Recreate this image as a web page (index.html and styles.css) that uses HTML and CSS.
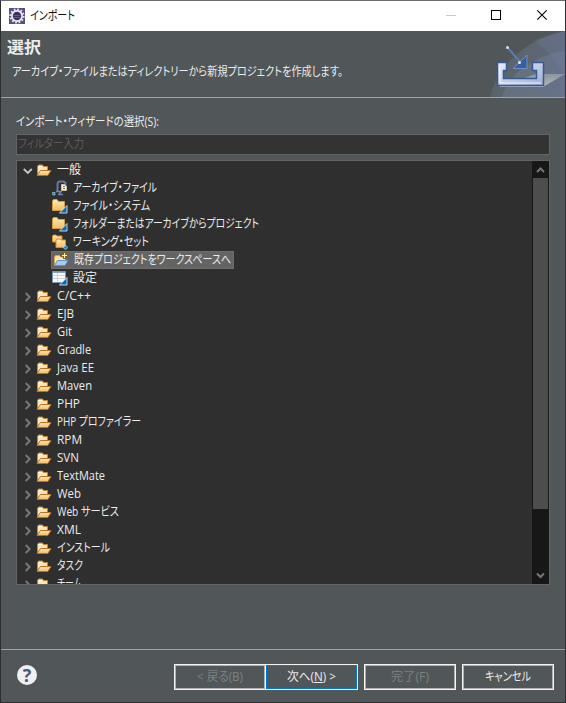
FILE: index.html
```html
<!DOCTYPE html>
<html lang="ja">
<head>
<meta charset="utf-8">
<title>インポート</title>
<link rel="stylesheet" href="styles.css">
</head>
<body>
<svg width="0" height="0" class="defs">
  <defs>
    <linearGradient id="gold" x1="0" y1="0" x2="0" y2="1"><stop offset="0" stop-color="#ffe9b0"/><stop offset="1" stop-color="#f3bd62"/></linearGradient>
    <linearGradient id="tray" x1="0" y1="0" x2="1" y2="1"><stop offset="0" stop-color="#e6edf9"/><stop offset="1" stop-color="#9daed2"/></linearGradient>
    <linearGradient id="sheen" x1="0" y1="0" x2="1" y2="0"><stop offset="0" stop-color="#59636b"/><stop offset=".5" stop-color="#5d666f"/><stop offset="1" stop-color="#5c6880"/></linearGradient>
    <linearGradient id="floor" x1="0" y1="0" x2="0" y2="1"><stop offset="0" stop-color="#8f959e"/><stop offset="1" stop-color="#b3b7bc"/></linearGradient>
    <symbol id="open" viewBox="0 0 16 16"><path d="M1.500 12.500V4.500L2.500 3H6.500L7.500 4.500H11.500V8" fill="#ffe6b3" stroke="#c58435"/><path d="M3 4.500H6" stroke="#fff"/><path d="M1 13.500L4.500 8.500H15L11.800 13.500Z" fill="url(#gold)" stroke="#b9702a"/></symbol>
    <symbol id="folder" viewBox="0 0 16 16"><path d="M.5 12.500V3L1.500 1.500H5L6.500 3.500H12.500V12.500Z" fill="url(#gold)" stroke="#d69b43"/><path d="M15 7.500V15H7.500Z" fill="#0868ac" stroke="#eef5fb" stroke-width=".8"/></symbol>
    <symbol id="archive" viewBox="0 0 16 16"><path d="M5.500 11V4Q5.500 1.500 8 1.500H11Q13.500 1.500 13.500 4V10" fill="none" stroke="#65789e" stroke-width="2"/><path d="M9.500 4.500H12.500L14.500 6.500V10.500H9.500Z" fill="#fff4cf" stroke="#d3c08c"/><path d="M11 6.500H13M11 8.500H13" stroke="#536e9c"/><path d="M4 11.500H10M6 14.500H11M8 11V15" stroke="#7384a5" stroke-width="1.700"/><path d="M-1 11.500C0 13 2 13 3 12V15H1Z" fill="#1682bd" stroke="#d9edf7" stroke-width=".5"/></symbol>
    <symbol id="sets" viewBox="0 0 16 16"><path d="M.5 8V2L1.500 1H4L5 2H10V8Z" fill="url(#gold)" stroke="#d98e2b"/><path d="M4 13.500V6L5 5H8L9 6H13.500V13.500Z" fill="url(#gold)" stroke="#d98e2b"/><circle cx="13.500" cy="13.500" r="1.800" fill="#1579bc" stroke="#dceef9" stroke-width=".6"/></symbol>
    <symbol id="project" viewBox="0 0 16 16"><path d="M1.500 13V5L2.500 3.500H6.500L7.500 5H12.500V9" fill="#ffe4a2" stroke="#d8a34f"/><path d="M1.500 13.500L4.500 8.500H15L12 13.500Z" fill="#a6ccf3" stroke="#628fd0"/><path d="M11.500 0V7M8 3.500H15" stroke="#806219" stroke-width="3"/><path d="M11.500 1V6M9 3.500H14" stroke="#fff1a9"/></symbol>
    <symbol id="prefs" viewBox="0 0 16 16"><path d="M.5 1.500H13.500V12.500H.5Z" fill="#f8fbff" stroke="#7e91b1"/><path d="M1 2.500H13" stroke="#8da4c9"/><path d="M1 5.500H13M1 8.500H13M5.500 3V12" stroke="#c8d4e4"/><path d="M15 7.500V15H7.500Z" fill="#0868ac" stroke="#eef5fb" stroke-width=".8"/></symbol>
    <symbol id="chev" viewBox="0 0 10 16"><path d="M2.700 5L6.700 9L2.700 13" fill="none" stroke="#7b7b7b" stroke-width="1.800"/></symbol>
    <symbol id="down" viewBox="0 0 10 16"><path d="M.8 7L4.800 11L8.800 7" fill="none" stroke="#c4c4c4" stroke-width="1.900"/></symbol>
  </defs>
</svg>
<div class="window">
  <div class="titlebar">
    <svg class="app" viewBox="0 0 16 16"><rect width="16" height="16" fill="#5d4b85"/><circle cx="8" cy="8" r="6.600" fill="none" stroke="#e4e2eb" stroke-width="2" stroke-dasharray="1.800 1.650"/><circle cx="8" cy="8" r="5.100" fill="#3a315c" stroke="#f0eff5" stroke-width="1.700"/><path d="M4.500 7.500H11.500M4.500 9.500H11.500" stroke="#625c80"/></svg>
    <span class="t" data-w="45">インポート</span>
    <svg class="controls" viewBox="0 0 138 30"><path d="M18 14.500H28" stroke="#c9c9c9"/><rect x="63.500" y="9.500" width="9" height="9" fill="none" stroke="#000"/><path d="M109.300 9.300L118.700 18.700M118.700 9.300L109.300 18.700" stroke="#000" stroke-width="1.100"/></svg>
  </div>
  <div class="header">
    <div class="headtext">
      <h1><span class="t" data-w="34">選択</span></h1>
      <p><span class="t" data-w="331">アーカイブ・ファイルまたはディレクトリーから新規プロジェクトを作成します。</span></p>
    </div>
    <svg class="banner" viewBox="0 0 75 66"><path d="M0 66C7 36 35 8 75 0V66Z" fill="url(#sheen)"/><path d="M12 66C18 44 44 24 75 20V66Z" fill="#75829c" opacity=".4"/><path d="M43 9C58 18 68 32 75 46V0Z" fill="#8794b1" opacity=".14"/><path d="M46 43H75L53 56H8Z" fill="url(#floor)"/><path d="M7.500 31.500H16.500V39.500H13.500V47.500H46.500V39.500H42.500V31.500H53.500V54.500H7.500Z" fill="url(#tray)" stroke="#38598f" stroke-width="1.500"/><path d="M10 34V52H51" fill="none" stroke="#f0f4ff"/><path d="M37 24V37.500H23Z" fill="#385f9f" stroke="#7592c3"/><path d="M18 17L30 31" stroke="#587eaf" stroke-width="2"/><circle cx="17.500" cy="16.500" r="1.500" fill="#d9e1ed"/><circle cx="29.500" cy="31.500" r="1.500" fill="#dce7f7"/></svg>
  </div>
  <div class="content">
    <label><span class="t" data-w="143">インポート・ウィザードの選択(S):</span></label>
    <div class="filter"><span class="t" data-w="66">フィルター入力</span></div>
    <div class="listbox">
      <div class="tree" id="tree"></div>
      <div class="scroll">
        <svg viewBox="0 0 17 17"><path d="M5 11L8.500 7.500L12 11" fill="none" stroke="#777" stroke-width="2"/></svg>
        <div class="thumb"></div>
        <svg class="end" viewBox="0 0 17 17"><path d="M5 6.500L8.500 10L12 6.500" fill="none" stroke="#777" stroke-width="2"/></svg>
      </div>
    </div>
  </div>
  <div class="footer">
    <div class="help">?</div>
    <div class="buttons">
      <div class="btn off"><span class="t" data-w="46">&lt; 戻る(B)</span></div>
      <div class="btn next"><span class="t" data-w="49">次へ(<u>N</u>) &gt;</span></div>
      <div class="btn off finish"><span class="t" data-w="38">完了(F)</span></div>
      <div class="btn cancel"><span class="t" data-w="46">キャンセル</span></div>
    </div>
  </div>
</div>
<script src="script.js"></script>
</body>
</html>
```
FILE: styles.css
```css
* { box-sizing: border-box; }
body { margin: 0; width: 566px; height: 703px; overflow: hidden; background: #303034; font: 12px/18px "Open Sans", "Noto Sans CJK JP", sans-serif; color: #ececec; }
.defs { position: absolute; }
svg { display: block; flex: none; }
.t { display: inline-block; white-space: nowrap; transform-origin: 0 50%; font-feature-settings: "palt"; flex: none; }
.window { width: 565px; height: 702px; border: 1px solid #2d2d2d; border-top-color: #6c6c6c; border-width: 1px 0 0 1px; background: #515658; display: flex; flex-direction: column; }
.titlebar { height: 30px; background: #fff; color: #111; display: flex; align-items: center; padding-left: 8px; }
.app { width: 16px; height: 16px; margin-right: 5px; }
.controls { width: 138px; height: 30px; margin-left: auto; margin-right: -1px; }
.header { height: 67px; border-bottom: 1px solid #a0a3a4; display: flex; justify-content: space-between; }
.headtext { padding: 5px 0 0 6px; }
h1 { margin: 0; font-size: 16px; line-height: 22px; height: 22px; }
p { margin: 5px 0 0 5px; }
.banner { width: 75px; height: 66px; }
.content { height: 552px; padding: 15px 15px 0; border-bottom: 1px solid #a0a3a4; }
label { display: block; height: 21px; }
.filter { height: 21px; border: 1px solid #646464; background: #333; color: #5b5b5b; padding-left: 1px; line-height: 18px; }
.listbox { height: 425px; margin-top: 5px; border: 1px solid #646464; background: #2f2f2f; display: flex; }
.tree { flex: 1; overflow: hidden; }
.row { height: 18px; display: flex; align-items: center; padding-left: 6px; }
.row .arrow { width: 10px; height: 16px; margin-right: 3px; }
.row .icon { width: 16px; height: 16px; margin-right: 5px; overflow: visible; }
.child { padding-left: 35px; }
.selected { width: 183px; margin-left: 34px; padding-left: 1px; background: #646464; border: 1px solid #6d6d6d; }
.scroll { width: 17px; background: #171717; display: flex; flex-direction: column; }
.scroll svg { width: 17px; height: 17px; }
.thumb { width: 15px; height: 331px; margin-left: 1px; background: #4d4d4d; }
.scroll .end { margin-top: auto; }
.footer { flex: 1; display: flex; justify-content: space-between; padding: 14px 11px 0 16px; }
.help { width: 20px; height: 20px; border-radius: 50%; margin-top: 1px; background: #f0f0f2; color: #485a80; font: bold 18px/20px "Open Sans", sans-serif; text-align: center; }
.buttons { display: flex; }
.btn { width: 92px; height: 26px; border: 1px solid #f3f3f3; outline: 1px solid #b0b0b0; outline-offset: -2px; display: flex; align-items: center; justify-content: center; }
.off { color: #7d8081; }
.next { width: 93px; outline-color: #0078d7; margin-left: -1px; }
.finish { margin-left: 6px; }
.cancel { margin-left: 6px; }
```
FILE: script.js
```js
const rows = [
  ["一般", 24, "open", "down"],
  ["アーカイブ・ファイル", 84, "archive"],
  ["ファイル・システム", 77, "folder"],
  ["フォルダーまたはアーカイブからプロジェクト", 186, "folder"],
  ["ワーキング・セット", 76, "sets"],
  ["既存プロジェクトをワークスペースへ", 157, "project", "selected"],
  ["設定", 24, "prefs"],
  ["C/C++", 34], ["EJB", 17], ["Git", 15], ["Gradle", 34], ["Java EE", 37],
  ["Maven", 35], ["PHP", 23], ["PHP プロファイラー", 84], ["RPM", 25],
  ["SVN", 22], ["TextMate", 48], ["Web", 24], ["Web サービス", 62],
  ["XML", 24], ["インストール", 53], ["タスク", 26], ["チーム", 25]
];
document.getElementById("tree").innerHTML = rows.map(([text, width, icon, state]) => {
  const child = icon && icon !== "open";
  const arrow = child ? "" : `<svg class="arrow"><use href="#${state === "down" ? "down" : "chev"}"/></svg>`;
  return `<div class="row ${child ? "child" : ""} ${state === "selected" ? "selected" : ""}">${arrow}<svg class="icon"><use href="#${icon || "open"}"/></svg><span class="t" data-w="${width}">${text}</span></div>`;
}).join("");

document.querySelectorAll(".t").forEach(el => {
  const natural = el.getBoundingClientRect().width;
  const target = Number(el.dataset.w);
  el.style.transform = `scaleX(${target / natural})`;
  el.style.marginRight = `${target - natural}px`;
});
```
